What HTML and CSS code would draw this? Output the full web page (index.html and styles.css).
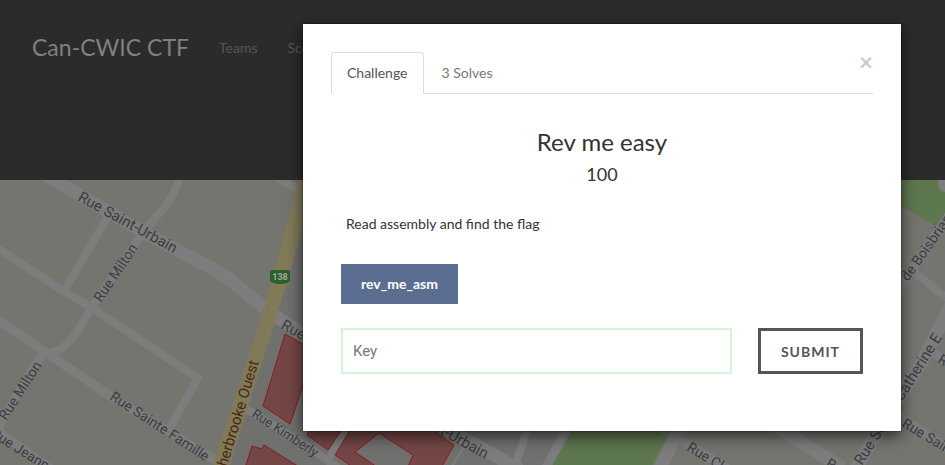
FILE: index.html
```html
<!DOCTYPE html>
<html lang="en">
<head>
<meta charset="utf-8">
<meta name="viewport" content="width=device-width, initial-scale=1">
<title>Can-CWIC CTF</title>
<link rel="stylesheet" href="styles.css">
</head>
<body>
<header class="header">
  <nav class="nav">
    <a class="brand" href="#">Can-CWIC CTF</a>
    <a class="nav-link" href="#">Teams</a>
    <a class="nav-link" href="#">Scoreboard</a>
  </nav>
</header>
<main class="map">
  <svg class="map-art" viewBox="0 180 945 285" preserveAspectRatio="xMinYMin slice" aria-hidden="true">
    <rect class="land" x="0" y="180" width="945" height="285"/>
    <path class="block" d="M317 180H570V465H230L277 315Z"/>
    <path class="park" d="M895 180H945V222L937 227L895 202Z"/>
    <path class="park" d="M572 431L553 465H652L667 437L658 431Z"/>
    <g class="roads">
      <path class="w13" d="M38 170L143 232L200 262Q218 271 230 280L267 310L290 326L440 425L487 451L520 470"/>
      <path class="w8" d="M180 178Q175 192 166 206L147 227L105 288L92 307L80 327Q68 347 56 351L43 355Q36 362 31 371L-3 430"/>
      <path class="w8" d="M107 218L65 289"/>
      <path class="w8" d="M-3 248L65 292L92 308L198 378L167 433"/>
      <path class="w9" d="M-3 319L48 354L110 396L222 464"/>
      <path class="w9" d="M-3 431L50 468"/>
      <path class="w8" d="M274 175L305 194"/>
      <path class="w8" d="M240 405L310 448L338 468"/>
      <path class="w8" d="M348 426L327 462"/>
      <path class="w8" d="M529 426L514 467"/>
      <path class="w9" d="M569 426L546 467"/>
      <path class="w13" d="M681 426L660 468"/>
      <path class="w9" d="M672 435L730 470"/>
      <path class="w13" d="M775 426L843 468"/>
      <path class="w13" d="M855 469L902 392L922 362L950 306"/>
      <path class="w9" d="M895 413L950 450"/>
      <path class="w8" d="M928 348L950 365"/>
      <path class="w9" d="M895 293L910 273L950 213"/>
      <path class="w8" d="M913 271L950 301"/>
      <path class="alley" d="M463 448L451 468"/>
      <circle class="turn" cx="946" cy="184" r="8"/>
    </g>
    <path class="highway" d="M299 180H317L277 315L230 465H213L262 315Z"/>
    <g class="zones">
      <path d="M285 334L310 348V365L290 424L263 406Z"/>
      <path d="M245 468L252 446L262 449L264 445L301 468Z"/>
      <path d="M310 425L307 435L328 450L345 425Z"/>
      <path fill-rule="evenodd" d="M353 425L335 455L354 468H441L454 445L425 425ZM379 433L355 452L380 469H407L413 455Z"/>
    </g>
    <path class="shield" d="M272 270H288Q290 270 290 272V281Q287 284 280 284Q273 284 270 281V272Q270 270 272 270Z"/>
    <text class="shield-text" x="280" y="280" text-anchor="middle">138</text>
    <g class="streets">
      <text class="big" transform="translate(77 200) rotate(29)">Rue Saint-Urbain</text>
      <text transform="translate(101 303) rotate(-56)">Rue Milton</text>
      <text transform="translate(6 421) rotate(-57)">Rue Milton</text>
      <text transform="translate(109 399) rotate(33)">Rue Sainte Famille</text>
      <text transform="translate(-10 436) rotate(32)">Rue Jeanne-Mance</text>
      <text class="big" transform="translate(280 328) rotate(29)">Rue Saint</text>
      <text class="small" transform="translate(251 416) rotate(33)">Rue Kimberly</text>
      <text class="big" transform="translate(485 459) rotate(29)" text-anchor="end">Rue Saint-Urbain</text>
      <text transform="translate(686 450) rotate(31)">Rue Clark</text>
      <text transform="translate(825 466) rotate(31)">Rue</text>
      <text class="big" transform="translate(862 466) rotate(-58)">Rue Sainte-Catherine E</text>
      <text transform="translate(901 426) rotate(31)">Rue Sainte</text>
      <text transform="translate(937 362) rotate(31)">Rue</text>
      <text transform="translate(908 282) rotate(-55)">de Boisbriand</text>
      <text class="big route" transform="translate(259 362) rotate(-73)" text-anchor="end">Sherbrooke Ouest</text>
    </g>
  </svg>
</main>
<section class="modal" role="dialog" aria-labelledby="challenge-title">
  <div class="tabs">
    <button class="tab tab-active" type="button">Challenge</button>
    <button class="tab" type="button">3 Solves</button>
    <button class="close" type="button" aria-label="Close">×</button>
  </div>
  <h3 class="title" id="challenge-title">Rev me easy</h3>
  <h4 class="points">100</h4>
  <p class="description">Read assembly and find the flag</p>
  <a class="file" href="#">rev_me_asm</a>
  <form class="answer">
    <input class="key" type="text" placeholder="Key" aria-label="Key">
    <button class="submit" type="submit">SUBMIT</button>
  </form>
</section>
</body>
</html>
```
FILE: styles.css
```css
* {
  box-sizing: border-box;
}

body {
  margin: 0;
  min-height: 100vh;
  display: flex;
  flex-direction: column;
  overflow: hidden;
  background: #2b2b2b;
  font-family: Lato, "Liberation Sans", sans-serif;
  font-size: 14px;
  line-height: 20px;
}

.header {
  height: 180px;
  padding: 32px;
}

.nav {
  display: flex;
  align-items: center;
  gap: 30px;
}

.brand,
.nav-link {
  text-decoration: none;
}

.brand {
  color: #808080;
  font-size: 23px;
  line-height: 30px;
}

.nav-link {
  color: #555;
  padding-top: 2px;
}

.map {
  flex: 1;
  display: flex;
  background: #757570;
}

.map-art {
  width: 100%;
  height: calc(100vh - 180px);
}

.land { fill: #757570; }
.block { fill: #70706f; }
.park { fill: #5d774f; }
.highway { fill: #807a59; }

.roads {
  fill: none;
  stroke: #7d7d7e;
  stroke-linejoin: round;
}

.w8 { stroke-width: 8px; }
.w9 { stroke-width: 9px; }
.w13 { stroke-width: 13px; }
.alley { stroke-width: 2px; }
.turn { fill: #7d7d7e; stroke: none; }

.zones {
  fill: #744746;
  stroke: #8a1c1c;
  stroke-width: 1px;
}

.shield { fill: #2b602a; }

.shield-text {
  fill: #a3aaa0;
  font-family: Roboto, sans-serif;
  font-size: 9px;
  font-weight: 700;
}

.streets {
  fill: #3c3d41;
  font-family: Roboto, sans-serif;
  font-size: 14px;
}

.big { font-size: 15px; }
.small { font-size: 13px; }
.route { fill: #4a2812; }

.modal {
  position: absolute;
  top: 24px;
  left: 303px;
  right: 44px;
  padding: 28px 28px 57px;
  background: #fff;
  color: #333;
  box-shadow: 0 0 1px #000, 0 5px 15px rgba(0, 0, 0, 0.65);
}

.tabs {
  display: flex;
  border-bottom: 1px solid #ddd;
}

.tab {
  margin: 0 2px -1px 0;
  padding: 10px 15px;
  border: 1px solid transparent;
  border-radius: 4px 4px 0 0;
  background: none;
  color: #777;
  font: inherit;
}

.tab-active {
  border-color: #ddd #ddd #fff;
  background: #fff;
  color: #555;
}

.close {
  align-self: flex-start;
  margin-left: auto;
  padding: 0;
  border: 0;
  background: none;
  color: #ccc;
  font: 700 24px/20px Lato, sans-serif;
}

.title,
.points {
  margin: 0;
  font-weight: 400;
  text-align: center;
}

.title {
  margin-top: 33px;
  font-size: 24px;
  line-height: 30px;
}

.points {
  margin-top: 6px;
  font-size: 18px;
  line-height: 22px;
}

.description {
  margin: 29px 15px 30px;
}

.file {
  display: inline-block;
  margin-left: 10px;
  padding: 10px 20px;
  background: #5b6e91;
  color: #fff;
  font-weight: 700;
  text-decoration: none;
}

.answer {
  display: flex;
  gap: 26px;
  margin: 24px 10px 0;
}

.key {
  flex: 1;
  min-width: 0;
  height: 46px;
  padding: 0 10px;
  border: 2px solid #d8f3d8;
  background: #fff;
  font: 15px Roboto, sans-serif;
}

.key::placeholder {
  color: #777;
}

.submit {
  height: 46px;
  padding: 0 20px;
  border: 3px solid #555;
  background: #fff;
  color: #555;
  font: 700 14px Lato, sans-serif;
  letter-spacing: 1px;
}
```
